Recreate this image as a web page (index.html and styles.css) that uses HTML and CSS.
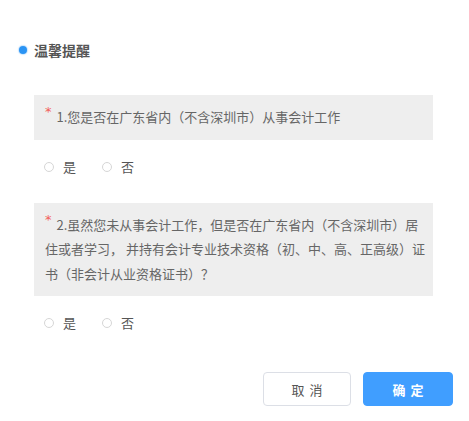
FILE: index.html
```html
<!DOCTYPE html>
<html lang="zh-CN">
<head>
<meta charset="utf-8">
<title>温馨提醒</title>
<link rel="stylesheet" href="styles.css">
</head>
<body>
<div class="dialog">
  <div class="header">
    <span class="dot"></span>
    <span class="title">温馨提醒</span>
  </div>
  <div class="form">
    <div class="question"><span class="star">*</span>1.您是否在广东省内（不含深圳市）从事会计工作</div>
    <div class="options">
      <label class="radio"><span class="circle"></span><span class="label">是</span></label>
      <label class="radio"><span class="circle"></span><span class="label">否</span></label>
    </div>
    <div class="question q2"><span class="star">*</span>2.虽然您未从事会计工作，但是否在广东省内（不含深圳市）居住或者学习， 并持有会计专业技术资格（初、中、高、正高级）证书（非会计从业资格证书）？</div>
    <div class="options">
      <label class="radio"><span class="circle"></span><span class="label">是</span></label>
      <label class="radio"><span class="circle"></span><span class="label">否</span></label>
    </div>
  </div>
  <div class="footer">
    <button class="btn btn-cancel">取消</button>
    <button class="btn btn-ok">确定</button>
  </div>
</div>
</body>
</html>
```
FILE: styles.css
```css
html, body {
  margin: 0;
  padding: 0;
  background: #ffffff;
}
body {
  font-family: "Noto Sans CJK SC", "Microsoft YaHei", sans-serif;
  color: #666;
}
.dialog {
  width: 469px;
  padding: 40px 16px 0 19px;
  box-sizing: border-box;
}
.header {
  display: flex;
  align-items: center;
  height: 20px;
  gap: 7px;
}
.dot {
  width: 8px;
  height: 8px;
  border-radius: 50%;
  background: #2a94f4;
  box-shadow: 0 0 1px 1px rgba(42, 148, 244, 0.25);
}
.title {
  font-size: 14px;
  font-weight: bold;
  color: #555;
  line-height: 20px;
}
.form {
  padding: 35px 20px 0 15px;
}
.question {
  background: #eeeeee;
  font-size: 13px;
  line-height: 24.5px;
  color: #666;
  padding: 10px 8px 10px 11px;
}
.q2 {
  margin-top: 26px;
}
.star {
  display: inline-block;
  color: #f2605a;
  font-family: "DejaVu Sans", sans-serif;
  font-size: 13px;
  line-height: 13px;
  vertical-align: 6px;
  margin-right: 5px;
}
.options {
  display: flex;
  align-items: center;
  height: 20px;
  margin-top: 17px;
  padding-left: 10px;
  gap: 26px;
}
.radio {
  display: flex;
  align-items: center;
  gap: 9px;
  font-size: 13px;
  color: #555;
}
.circle {
  width: 8px;
  height: 8px;
  border: 1px solid #d6d6d6;
  border-radius: 50%;
  background: #fff;
}
.label {
  line-height: 20px;
}
.footer {
  display: flex;
  justify-content: flex-end;
  gap: 12px;
  margin-top: 39px;
}
.btn {
  height: 34px;
  border-radius: 4px;
  font-family: "Noto Sans CJK SC", sans-serif;
  font-size: 13px;
  letter-spacing: 5px;
  text-indent: 5px;
  cursor: pointer;
  padding: 0;
}
.btn-cancel {
  width: 88px;
  background: #fff;
  border: 1px solid #dcdfe6;
  color: #555;
}
.btn-ok {
  width: 90px;
  background: #409eff;
  border: 1px solid #409eff;
  color: #fff;
  font-weight: bold;
}
```
